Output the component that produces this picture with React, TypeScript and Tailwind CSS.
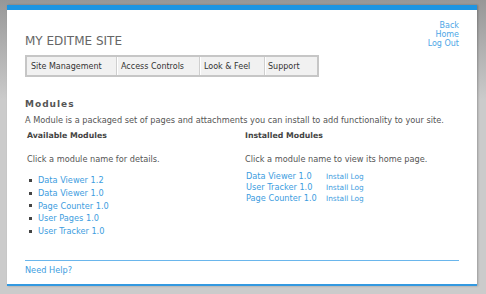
import React from 'react';

const available = ["Data Viewer 1.2", "Data Viewer 1.0", "Page Counter 1.0", "User Pages 1.0", "User Tracker 1.0"];
const installed = ["Data Viewer 1.0", "User Tracker 1.0", "Page Counter 1.0"];

export default function App() {
  return (
    <div className="w-[486px] h-[294px] bg-[linear-gradient(#979797,#cbcbcb_100px,#cbcbcb)] pt-[5px] pl-[7px] font-['DejaVu_Sans',Verdana,sans-serif] text-[#555]">
      {/* Page panel */}
      <div className="w-[470px] h-[281px] bg-white border-t-[5px] border-b-2 border-t-[#1d95e2] border-b-[#3399e0] shadow-[1px_0_2px_rgba(0,0,0,0.25)] flex flex-col">
        <div className="px-[18px] pt-[11px] flex-1 flex flex-col">
          {/* Header */}
          <div className="flex justify-between items-start">
            <div className="pt-[13px]">
              <h1 className="text-[12px] leading-[15px] text-[#666]">MY EDITME SITE</h1>
              <div className="mt-[6px] flex border-2 border-[#c6c6c6] bg-[#f1f1f1] text-[8px] leading-[17px] text-[#333]">
                <div className="w-[89px] pl-[4px] pt-px">Site Management</div>
                <div className="w-[83px] pl-[4px] pt-px border-l border-[#cfcfcf] shadow-[inset_1px_0_0_#fff]">Access Controls</div>
                <div className="w-[65px] pl-[4px] pt-px border-l border-[#cfcfcf] shadow-[inset_1px_0_0_#fff]">Look &amp; Feel</div>
                <div className="w-[53px] pl-[3px] pt-px border-l border-[#cfcfcf] shadow-[inset_1px_0_0_#fff]">Support</div>
              </div>
            </div>
            <div className="flex flex-col items-end text-[8px] leading-[9px] text-[#4da6e6]">
              <a>Back</a>
              <a>Home</a>
              <a>Log Out</a>
            </div>
          </div>

          {/* Modules */}
          <h2 className="mt-[22px] text-[9px] leading-[11px] font-bold tracking-[1px] text-[#555]">Modules</h2>
          <p className="mt-[5px] text-[8.2px] leading-[10px]">
            A Module is a packaged set of pages and attachments you can install to add functionality to your site.
          </p>

          <div className="grid grid-cols-[219px_1fr] text-[8.2px]">
            <div className="pl-[2px]">
              <div className="mt-[6px] font-bold text-[7.8px] leading-[10px] text-[#444]">Available Modules</div>
              <div className="mt-[13px] leading-[10px]">Click a module name for details.</div>
              <ul className="mt-[10px] leading-[12.8px]">
                {available.map((m) => (
                  <li key={m} className="flex items-center">
                    <span className="ml-[2px] w-[3px] h-[3px] bg-[#444]" />
                    <a className="ml-[6px] text-[#3d9de0]">{m}</a>
                  </li>
                ))}
              </ul>
            </div>
            <div className="pl-[1px]">
              <div className="mt-[6px] font-bold text-[7.8px] leading-[10px] text-[#444]">Installed Modules</div>
              <div className="mt-[13px] leading-[10px]">Click a module name to view its home page.</div>
              <ul className="mt-[7px] leading-[11px]">
                {installed.map((m) => (
                  <li key={m} className="flex items-baseline">
                    <a className="w-[81px] pl-[1px] text-[#3d9de0]">{m}</a>
                    <a className="text-[7.4px] text-[#3d9de0]">Install Log</a>
                  </li>
                ))}
              </ul>
            </div>
          </div>

          {/* Footer */}
          <div className="mt-[22px] border-t border-[#6ab6ec]" />
          <a className="mt-[4px] text-[8.2px] leading-[10px] text-[#3d9de0]">Need Help?</a>
        </div>
      </div>
    </div>
  );
}
